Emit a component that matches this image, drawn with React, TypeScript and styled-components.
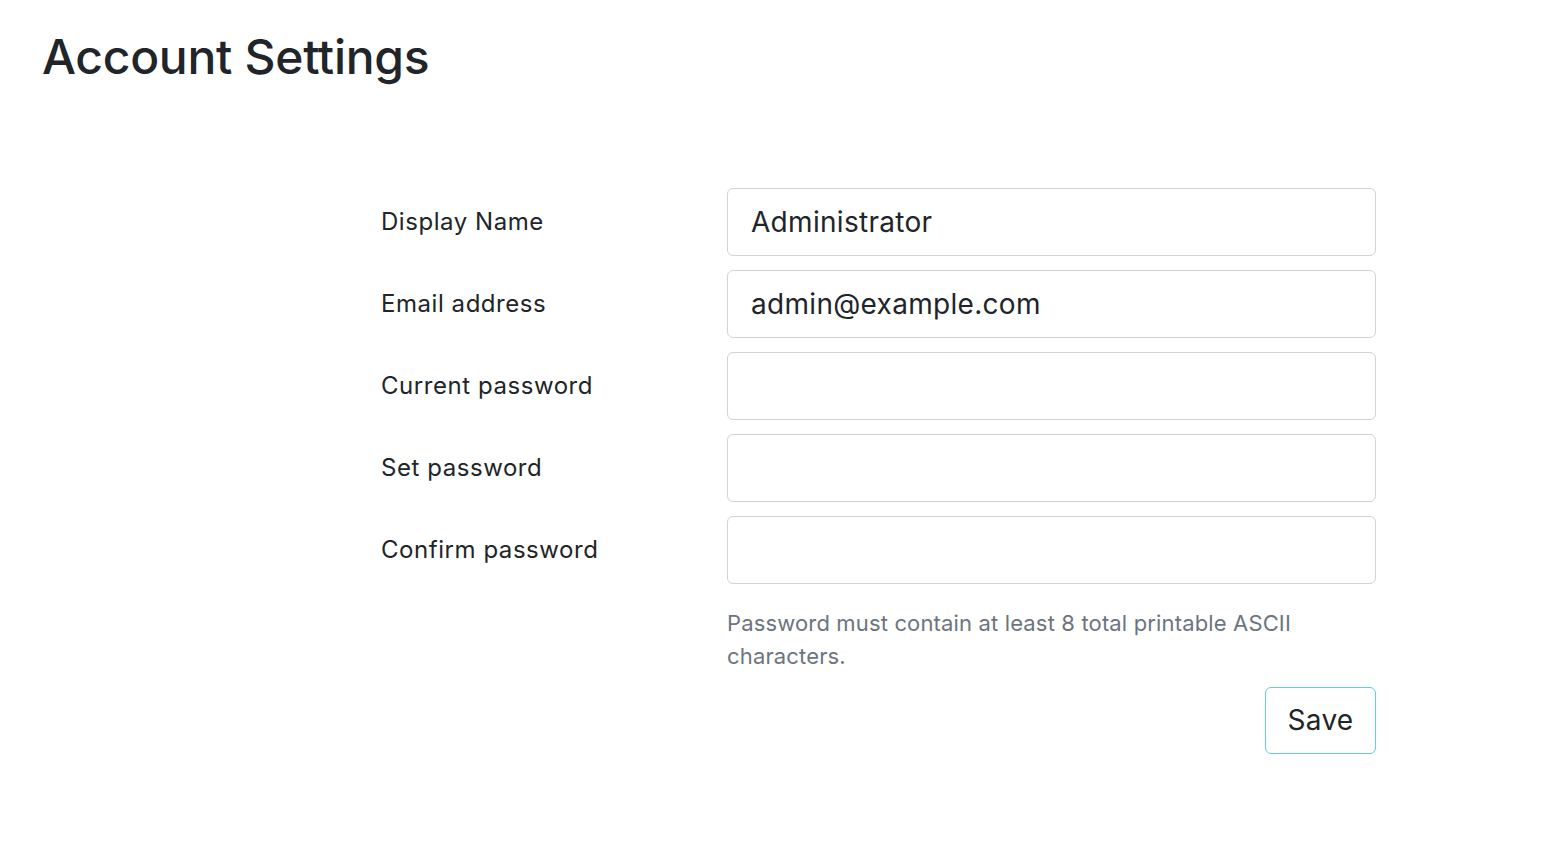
import React from "react";
import styled, { createGlobalStyle } from "styled-components";

const Global = createGlobalStyle`
  html, body { margin: 0; padding: 0; background: #fff; }
  body { font-family: Inter, "Noto Sans", sans-serif; color: #212529; }
  * { box-sizing: border-box; }
`;

const Page = styled.div`
  padding: 28px 42px 0;
`;

const Title = styled.h1`
  margin: 0;
  font-size: 48px;
  font-weight: 500;
  line-height: 1.2;
  letter-spacing: -0.3px;
  color: #212529;
`;

const Form = styled.form`
  width: 995px;
  margin: 102px 0 0 339px;
  display: grid;
  grid-template-columns: 346px 649px;
  row-gap: 14px;
`;

const Label = styled.label`
  display: flex;
  align-items: center;
  height: 68px;
  font-size: 24px;
  letter-spacing: 0.55px;
  color: #212529;
`;

const Input = styled.input`
  height: 68px;
  width: 100%;
  border: 1px solid #ced4da;
  border-radius: 6px;
  padding: 0 23px;
  font-family: inherit;
  font-size: 28px;
  letter-spacing: 0.3px;
  color: #212529;
  background: #fff;
  outline: none;
`;

const Help = styled.div`
  grid-column: 2;
  margin-top: 9px;
  font-size: 22px;
  letter-spacing: 0.15px;
  line-height: 33px;
  color: #6c757d;
`;

const Actions = styled.div`
  grid-column: 2;
  display: flex;
  justify-content: flex-end;
`;

const SaveButton = styled.button`
  width: 111px;
  height: 67px;
  border: 1px solid #62cbf2;
  border-radius: 6px;
  background: #fff;
  font-family: inherit;
  font-size: 28px;
  letter-spacing: 0.3px;
  color: #212529;
`;

const fields: { label: string; value: string; type: string }[] = [
  { label: "Display Name", value: "Administrator", type: "text" },
  { label: "Email address", value: "admin@example.com", type: "email" },
  { label: "Current password", value: "", type: "password" },
  { label: "Set password", value: "", type: "password" },
  { label: "Confirm password", value: "", type: "password" },
];

export default function App() {
  return (
    <>
      <Global />
      <Page>
        <Title>Account Settings</Title>
        <Form onSubmit={(e) => e.preventDefault()}>
          {fields.map((f) => (
            <React.Fragment key={f.label}>
              <Label>{f.label}</Label>
              <Input type={f.type} defaultValue={f.value} />
            </React.Fragment>
          ))}
          <Help>
            Password must contain at least 8 total printable ASCII
            <br />
            characters.
          </Help>
          <Actions>
            <SaveButton type="submit">Save</SaveButton>
          </Actions>
        </Form>
      </Page>
    </>
  );
}
